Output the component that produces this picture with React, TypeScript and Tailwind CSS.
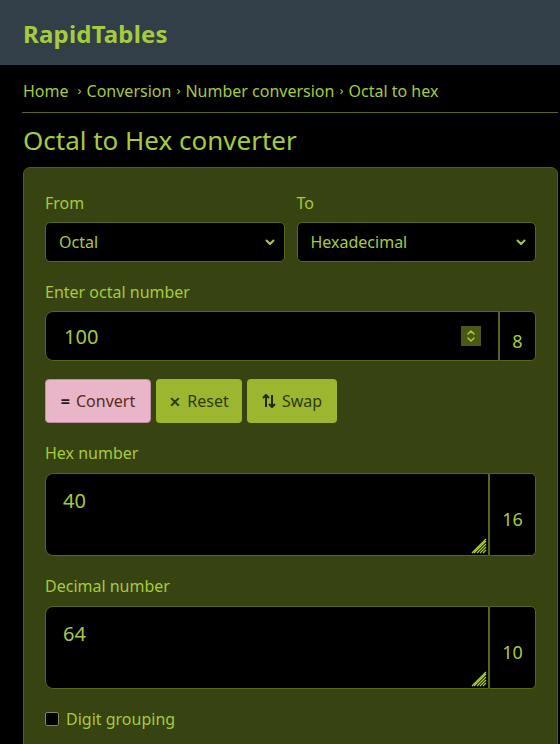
import React from "react";

const G = "text-[#a6cb3e]";

function Chevron() {
  return (
    <svg width="12" height="12" viewBox="0 0 12 12" className="shrink-0">
      <path d="M2.5 4.5 L6 8 L9.5 4.5" fill="none" stroke="#a6cb3e" strokeWidth="2" strokeLinecap="round" strokeLinejoin="round" />
    </svg>
  );
}

function Grip() {
  return (
    <svg width="16" height="16" viewBox="0 0 16 16" className="absolute right-[1px] bottom-[1px]">
      <path d="M15 3 L3 15 M15 6 L6 15 M15 9 L9 15 M15 12 L12 15 M15 1 L1 15" stroke="#a6cb3e" strokeWidth="1.3" />
    </svg>
  );
}

function Select({ label }: { label: string }) {
  return (
    <div className="w-full h-[40px] shrink-0 bg-black border border-[#55671b] rounded-[5px] flex items-center justify-between pl-[13px] pr-[8px]">
      <span className={`${G} text-[16px]`}>{label}</span>
      <Chevron />
    </div>
  );
}

function Addon({ value, h }: { value: string; h: string }) {
  return (
    <div className={`w-[37px] ${h} bg-black border border-[#55671b] rounded-r-[5px] flex items-center justify-center pt-[10px] ${G} text-[18px]`}>
      {value}
    </div>
  );
}

function OutBox({ value, base }: { value: string; base: string }) {
  return (
    <div className="flex mr-[21px]">
      <div className="relative flex-1 h-[83px] bg-black border border-[#55671b] rounded-l-[8px] pl-[17px] pt-[12px]">
        <span className={`${G} text-[20px]`}>{value}</span>
        <Grip />
      </div>
      <div className="w-[47px] h-[83px] bg-black border border-[#55671b] rounded-r-[5px] flex items-center justify-center pt-[10px]">
        <span className={`${G} text-[18px]`}>{base}</span>
      </div>
    </div>
  );
}

export default function App() {
  return (
    <div className="w-[560px] h-[744px] overflow-hidden bg-black" style={{ fontFamily: '"Noto Sans", "Open Sans", sans-serif' }}>
      <header className="h-[65px] bg-[#333f48] flex items-center pl-[23px] pt-[2px]">
        <span className="text-[#a6cb3e] text-[24px] font-bold tracking-[0.2px]">RapidTables</span>
      </header>
      <div className="pl-[22px] pr-[2px]">
        <nav className={`h-[48px] pt-[4px] flex items-center ${G} text-[16px] border-b border-[#55671b] pl-[1px]`}>
          <span>Home</span>
          <span className="mx-[5px] ml-[9px] text-[13px]">›</span>
          <span>Conversion</span>
          <span className="mx-[5px] text-[13px]">›</span>
          <span>Number conversion</span>
          <span className="mx-[5px] text-[13px]">›</span>
          <span>Octal to hex</span>
        </nav>
        <h1 className={`h-[54px] flex items-center ${G} text-[26px] pl-[1px]`}>Octal to Hex converter</h1>
        <div className="ml-[1px] bg-[#374310] border border-[#4d5e17] rounded-[7px] pl-[21px] pt-[24px] h-[600px]">
          <div className="flex gap-[12px] mr-[21px]">
            <div className="flex-1 flex flex-col gap-[8px]">
              <div className={`${G} text-[16px] h-[22px] leading-[22px]`}>From</div>
              <Select label="Octal" />
            </div>
            <div className="flex-1 flex flex-col gap-[8px]">
              <div className={`${G} text-[16px] h-[22px] leading-[22px]`}>To</div>
              <Select label="Hexadecimal" />
            </div>
          </div>

          <div className={`${G} text-[16px] h-[22px] leading-[22px] mt-[19px]`}>Enter octal number</div>
          <div className="flex mt-[8px] mr-[21px]">
            <div className="flex-1 h-[50px] bg-black border border-[#55671b] rounded-l-[8px] flex items-center justify-between pl-[18px] pr-[17px]">
              <span className={`${G} text-[20px] pt-[2px]`}>100</span>
              <div className="w-[20px] h-[20px] bg-[#4a5a16] flex items-center justify-center">
                <svg width="12" height="16" viewBox="0 0 12 16">
                  <path d="M3 6 L6 3 L9 6 M3 10 L6 13 L9 10" fill="none" stroke="#a6cb3e" strokeWidth="1.5" strokeLinecap="round" strokeLinejoin="round" />
                </svg>
              </div>
            </div>
            <Addon value="8" h="h-[50px]" />
          </div>

          <div className="flex gap-[5px] mt-[18px] h-[44px]">
            <button className="w-[106px] h-[44px] rounded-[4px] bg-[#e8b5c9] border border-[#c58aa5] text-[#5a2b18] text-[16px] flex items-center justify-center gap-[6px]">
              <span className="text-[#2a1a10] font-bold">=</span>Convert
            </button>
            <button className="w-[86px] h-[44px] rounded-[4px] bg-[#9db62f] text-[#2e3b10] text-[16px] flex items-center justify-center gap-[6px]">
              <span className="font-bold text-[14px]">✕</span>Reset
            </button>
            <button className="w-[90px] h-[44px] rounded-[4px] bg-[#9db62f] text-[#2e3b10] text-[16px] flex items-center justify-center gap-[6px]">
              <svg width="14" height="16" viewBox="0 0 14 16">
                <path d="M4 14 V2 M1 5 L4 2 L7 5 M10 2 V14 M7 11 L10 14 L13 11" fill="none" stroke="#1e2a08" strokeWidth="2" strokeLinejoin="round" />
              </svg>
              Swap
            </button>
          </div>

          <div className={`${G} text-[16px] h-[22px] leading-[22px] mt-[19px]`}>Hex number</div>
          <div className="mt-[9px]">
            <OutBox value="40" base="16" />
          </div>

          <div className={`${G} text-[16px] h-[22px] leading-[22px] mt-[19px]`}>Decimal number</div>
          <div className="mt-[9px]">
            <OutBox value="64" base="10" />
          </div>

          <div className="flex items-center gap-[7px] mt-[18px]">
            <div className="w-[14px] h-[14px] bg-black border border-[#7b8a50] rounded-[2px]" />
            <span className={`${G} text-[16px]`}>Digit grouping</span>
          </div>
        </div>
      </div>
    </div>
  );
}
